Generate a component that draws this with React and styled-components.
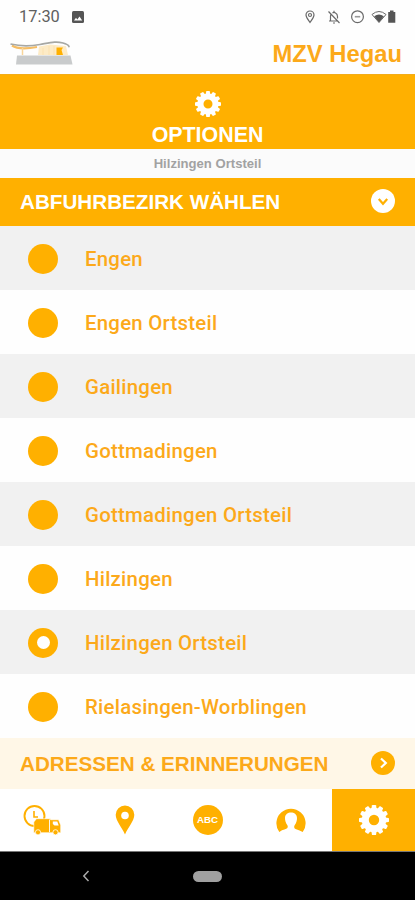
import { useState } from 'react'
import styled, { createGlobalStyle } from 'styled-components'

const orange = '#ffb000'
const textOrange = '#fca91a'

const GlobalStyle = createGlobalStyle`
  * { box-sizing: border-box; }
  body {
    margin: 0;
    background: #fff;
  }
`

const Page = styled.div`
  display: flex;
  flex-direction: column;
  width: 415px;
  height: 900px;
  overflow: hidden;
  background: #fefefe;
  font-family: "Liberation Sans", Arial, sans-serif;
`

const StatusBar = styled.div`
  display: flex;
  align-items: center;
  justify-content: space-between;
  height: 33px;
  padding: 0 18px 0 19px;
`

const StatusGroup = styled.div`
  display: flex;
  align-items: center;
  gap: 12px;
`

const Clock = styled.span`
  font: 400 16.4px/20px Roboto, sans-serif;
  color: #606060;
`

const Header = styled.header`
  display: flex;
  align-items: center;
  justify-content: space-between;
  height: 41px;
  padding: 0 13px 0 9px;
`

const Brand = styled.h1`
  margin: 0;
  font-size: 23.8px;
  line-height: 41px;
  color: ${textOrange};
`

const TitleBlock = styled.div`
  display: flex;
  flex-direction: column;
  align-items: center;
  height: 75px;
  padding-top: 16px;
  background: ${orange};
  border-top: 1px solid #f3ad18;
`

const Title = styled.h2`
  margin: 6px 0 0;
  font-size: 21.4px;
  line-height: 24px;
  color: #fff;
`

const District = styled.div`
  height: 29px;
  background: #fbfbfb;
  font-size: 13.1px;
  font-weight: 700;
  line-height: 30px;
  text-align: center;
  color: #a2a2a2;
`

const SectionBar = styled.div`
  display: flex;
  align-items: center;
  justify-content: space-between;
  flex: none;
  height: ${props => props.$open ? 48 : 51}px;
  padding: 0 20px ${props => props.$open ? 2 : 0}px;
  background: ${props => props.$open ? orange : '#fff7e7'};
  color: ${props => props.$open ? '#fff' : textOrange};
  font-size: 20.65px;
  font-weight: 700;
  line-height: 46px;
`

const SectionLabel = styled.span`
  padding-top: 1px;
`

const List = styled.ul`
  display: grid;
  grid-template-rows: repeat(8, 1fr);
  height: 511.5px;
  margin: 0;
  padding: 0;
  list-style: none;
`

const Row = styled.li`
  display: flex;
  align-items: center;
  padding: 2px 0 0 28px;
  gap: 27px;
  background: #fefefe;
  color: ${textOrange};
  font: 500 20.4px/24px Roboto, sans-serif;
  letter-spacing: .25px;
  cursor: pointer;

  &:nth-child(odd) {
    background: #f1f1f1;
  }
`

const Radio = styled.span`
  display: flex;
  align-items: center;
  justify-content: center;
  width: 30px;
  height: 30px;
  border-radius: 50%;
  background: ${orange};

  &::after {
    content: "";
    width: ${props => props.$checked ? 13 : 0}px;
    height: ${props => props.$checked ? 13 : 0}px;
    border-radius: 50%;
    background: #fff;
  }
`

const TabBar = styled.nav`
  display: grid;
  grid-template-columns: repeat(5, 1fr);
  height: 62.5px;
`

const Tab = styled.div`
  display: flex;
  align-items: center;
  justify-content: center;
  background: ${props => props.$active ? orange : '#fff'};
`

const AbcBadge = styled.span`
  width: 30px;
  height: 30px;
  border-radius: 50%;
  background: ${orange};
  color: #fff;
  font-size: 9.7px;
  font-weight: 700;
  line-height: 30px;
  text-align: center;
`

const SystemBar = styled.div`
  display: grid;
  grid-template-columns: 171px 73px 171px;
  align-items: center;
  justify-items: center;
  height: 49px;
  background: #000;
  border-top: 1px solid #777;
`

const HomePill = styled.span`
  width: 29px;
  height: 11px;
  border-radius: 6px;
  background: #a0a0a0;
`

const teeth = Array.from({ length: 12 }, (_, i) => i * 30)

function Gear({ size }) {
  return (
    <svg width={size} height={size} viewBox="0 0 30 30">
      <g fill="#fff">
        {teeth.map(angle => (
          <path key={angle} d="M12.2 5 12.900 .6Q13 0 13.700 0H16.300Q17 0 17.100 .6L17.800 5Z" transform={`rotate(${angle} 15 15)`} />
        ))}
      </g>
      <circle cx="15" cy="15" r="8.700" fill="none" stroke="#fff" strokeWidth="7" />
    </svg>
  )
}

function Logo() {
  return (
    <svg width="65" height="28" viewBox="0 0 65 28">
      <path d="M8 15.500H61.500L63.500 24.500H7Z" fill="#c9cbcc" />
      <path d="M30 6.500 41 4.500 57 6 59 15H29Z" fill="#fdebc6" />
      <path d="M34 8V15M40 6V15M45 6V15" stroke="#f9dda6" strokeWidth=".7" />
      <path d="M47.500 7.500H54L52.500 10 54 15H47.500Z" fill={orange} />
      <path d="M3 5.500C8 9 17 9 28 7" fill="none" stroke="#f5bd65" strokeWidth="2.200" />
      <path d="M13.500 8V15" stroke="#f8d59a" strokeWidth="1.500" />
      <path d="M1.500 4C10 6 20 6.500 31 4.500S47 1 54 3 59 6 60.500 7" fill="none" stroke="#a7a8a4" strokeWidth="1.700" />
    </svg>
  )
}

function StatusIcons() {
  return (
    <svg width="92" height="18" viewBox="0 0 92 18" fill="none" stroke="#6a6a6a" strokeWidth="1.200">
      <path d="M1 7a4 4 0 0 1 8 0C9 9.300 7 11.500 5 14.500 3 11.500 1 9.300 1 7Z" />
      <circle cx="5" cy="7" r="1.500" />
      <path d="M23.500 3.500 34.500 15M24 13H32.500M25.500 12.500V8.200Q25.500 6.800 26.300 6M27.500 5Q29 3.800 30.500 5 32.500 6 32.500 8.500V10.500M28 15H30M29 4V2.800" />
      <circle cx="52.500" cy="8.700" r="5.900" />
      <path d="M49.800 8.700H55.200" stroke="#999" strokeWidth="1.600" />
      <path d="M67 6.500Q74 .5 81 6.500L74 14.500Z" strokeWidth="1" />
      <path d="M69.200 8.300Q74 4.800 78.800 8.300L74 14.500Z" fill="#555" stroke="none" />
      <path d="M85 2.500H88.500V4H90.300V14.800H83.200V4H85Z" fill="#555" stroke="none" />
    </svg>
  )
}

function Arrow({ down }) {
  return (
    <svg width="24" height="24" viewBox="0 0 24 24">
      <circle cx="12" cy="12" r="12" fill={down ? '#fff' : orange} />
      <path
        d={down ? 'M7.800 10 12 14.800 16.200 10' : 'M10 7.500 14.800 12 10 16.500'}
        fill="none"
        stroke={down ? orange : '#fff'}
        strokeWidth="2.200"
      />
    </svg>
  )
}

function TruckIcon() {
  return (
    <svg width="38" height="30" viewBox="0 0 38 30">
      <circle cx="11.500" cy="11" r="10" fill="#fff" stroke={orange} strokeWidth="1.900" />
      <path d="M11 6V12H15" fill="none" stroke={orange} strokeWidth="1.600" />
      <path d="M13.500 13.700H27.500V14.700H35.500L37.700 20V27.700H10.800V17Z" fill={orange} stroke="#fff" strokeWidth=".6" />
      <path d="M26.500 14.500V27" stroke="#fff" strokeWidth=".9" />
      <path d="M29.800 16.500H34.300L35.700 20.500H31.500L29.800 19Z" fill="#fff" />
      <circle cx="15" cy="27.300" r="2.600" fill={orange} stroke="#fff" strokeWidth=".8" />
      <circle cx="32.500" cy="27.300" r="2.600" fill={orange} stroke="#fff" strokeWidth=".8" />
    </svg>
  )
}

function PinIcon() {
  return (
    <svg width="20" height="30" viewBox="0 0 20 30">
      <path d="M10 29.500C7 22 .700 16 .700 9.700a9.300 9.300 0 0 1 18.600 0C19.300 16 13 22 10 29.500Z" fill={orange} />
      <circle cx="10" cy="10.500" r="3.800" fill="#fff" />
    </svg>
  )
}

function PersonIcon() {
  return (
    <svg width="30" height="26" viewBox="0 0 30 26">
      <path d="M3.300 25A14.600 14.600 0 1 1 26.700 25Q24 23.300 19.500 22 17.500 21 18.500 18.500C20.500 16 21 13 21 11 21 3.700 9 3.700 9 11 9 13 9.500 16 11.500 18.500 12.500 21 10.500 22 6 23.300 3.300 25Z" fill={orange} />
    </svg>
  )
}

const districts = [
  'Engen',
  'Engen Ortsteil',
  'Gailingen',
  'Gottmadingen',
  'Gottmadingen Ortsteil',
  'Hilzingen',
  'Hilzingen Ortsteil',
  'Rielasingen-Worblingen'
]

function App() {
  const [selected, setSelected] = useState('Hilzingen Ortsteil')

  return (
    <>
      <GlobalStyle />
      <Page>
        <StatusBar>
          <StatusGroup>
            <Clock>17:30</Clock>
            <svg width="12" height="12" viewBox="0 0 12 12">
              <rect width="12" height="12" rx="1.500" fill="#555" />
              <path d="M2 9.500 4 6.800 5.300 8.500 7.500 5.500 10.200 9.500Z" fill="#fff" />
            </svg>
          </StatusGroup>
          <StatusIcons />
        </StatusBar>
        <Header>
          <Logo />
          <Brand>MZV Hegau</Brand>
        </Header>
        <TitleBlock>
          <Gear size={26} />
          <Title>OPTIONEN</Title>
        </TitleBlock>
        <District>{selected}</District>
        <SectionBar $open>
          <SectionLabel>ABFUHRBEZIRK WÄHLEN</SectionLabel>
          <Arrow down />
        </SectionBar>
        <List>
          {districts.map(name => (
            <Row key={name} onClick={() => setSelected(name)}>
              <Radio $checked={name === selected} />
              {name}
            </Row>
          ))}
        </List>
        <SectionBar>
          <SectionLabel>ADRESSEN &amp; ERINNERUNGEN</SectionLabel>
          <Arrow />
        </SectionBar>
        <TabBar>
          <Tab><TruckIcon /></Tab>
          <Tab><PinIcon /></Tab>
          <Tab><AbcBadge>ABC</AbcBadge></Tab>
          <Tab><PersonIcon /></Tab>
          <Tab $active><Gear size={30} /></Tab>
        </TabBar>
        <SystemBar>
          <svg width="8" height="12" viewBox="0 0 8 12">
            <path d="M6.500 1 1.800 6 6.500 11" fill="none" stroke="#aaa" strokeWidth="1.500" />
          </svg>
          <HomePill />
        </SystemBar>
      </Page>
    </>
  )
}

export default App
